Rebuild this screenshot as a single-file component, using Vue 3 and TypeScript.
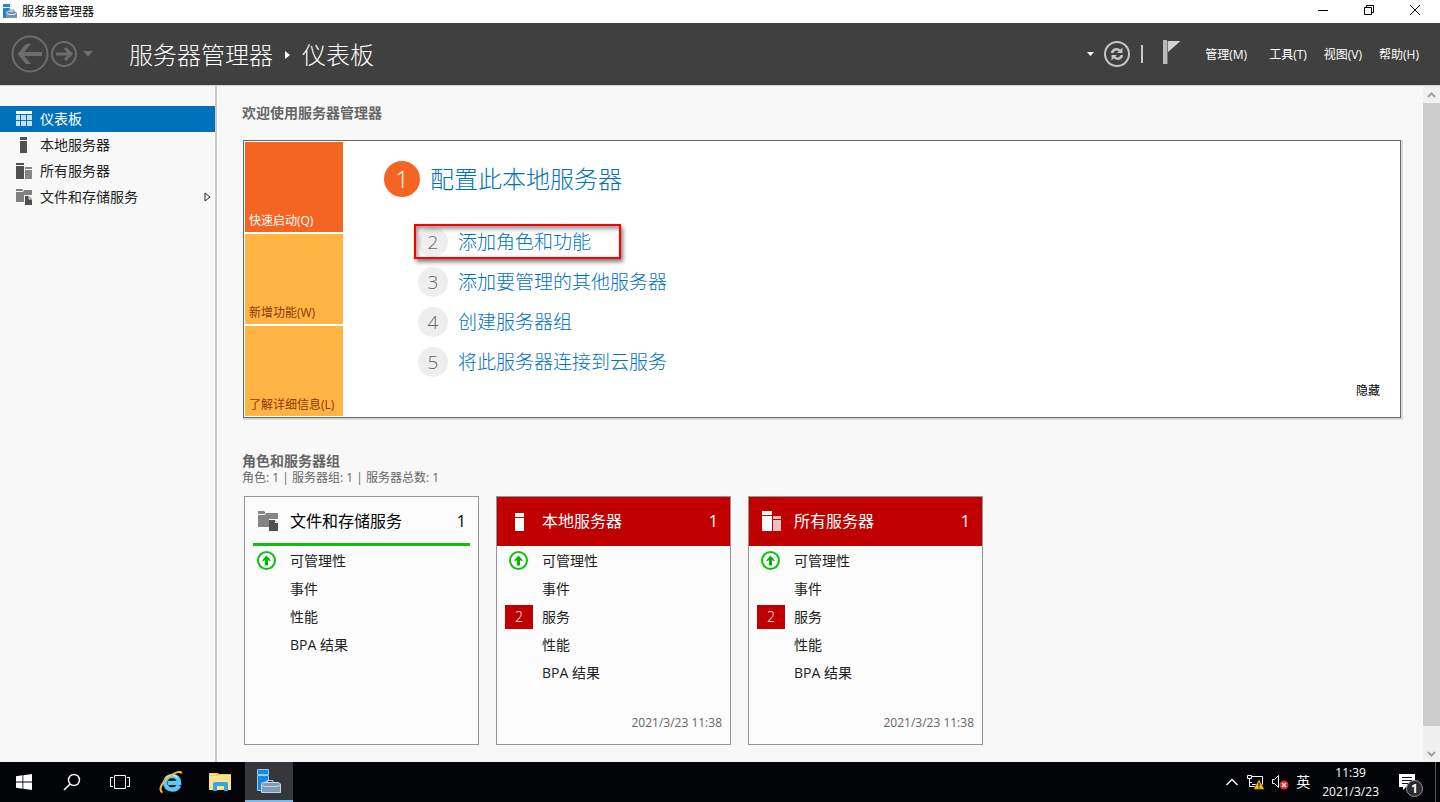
<script setup lang="ts">
import { ref } from 'vue'

type IconKind = 'dash' | 'server' | 'servers' | 'files'

interface NavItem {
  label: string
  icon: IconKind
  expandable?: boolean
}

interface CardRow {
  label: string
  ok?: boolean
  alerts?: number
}

interface Card {
  title: string
  icon: IconKind
  count: number
  alert: boolean
  rows: CardRow[]
  time?: string
}

const active = ref(0)
const showWelcome = ref(true)

const navItems: NavItem[] = [
  { label: '仪表板', icon: 'dash' },
  { label: '本地服务器', icon: 'server' },
  { label: '所有服务器', icon: 'servers' },
  { label: '文件和存储服务', icon: 'files', expandable: true },
]

const menus: string[] = ['管理(M)', '工具(T)', '视图(V)', '帮助(H)']

const steps: string[] = ['添加角色和功能', '添加要管理的其他服务器', '创建服务器组', '将此服务器连接到云服务']

const alertRows: CardRow[] = [
  { label: '可管理性', ok: true },
  { label: '事件' },
  { label: '服务', alerts: 2 },
  { label: '性能' },
  { label: 'BPA 结果' },
]

const cards: Card[] = [
  {
    title: '文件和存储服务',
    icon: 'files',
    count: 1,
    alert: false,
    rows: [{ label: '可管理性', ok: true }, { label: '事件' }, { label: '性能' }, { label: 'BPA 结果' }],
  },
  { title: '本地服务器', icon: 'server', count: 1, alert: true, rows: alertRows, time: '2021/3/23 11:38' },
  { title: '所有服务器', icon: 'servers', count: 1, alert: true, rows: alertRows, time: '2021/3/23 11:38' },
]
</script>

<template>
  <div class="screen">
    <div class="titlebar">
      <svg class="app-icon" viewBox="0 0 16 16" width="16" height="16">
        <path d="M1 0h7v3H1zM1 4h7v2L4 8v6H1z" fill="#1d87d2" />
        <path d="M6 8V6h6v2" fill="none" stroke="#7596b1" />
        <path d="M4 9l2-1.500h7L15 9v5H4z" fill="#7596b1" />
        <path d="M5 9.500l2 1h5l2-1" stroke="#e3edf5" fill="none" />
      </svg>
      <span class="window-name">服务器管理器</span>
      <div class="window-buttons">
        <button type="button" aria-label="最小化">
          <svg width="12" height="12"><path d="M1 6.500h10" stroke="#000" /></svg>
        </button>
        <button type="button" aria-label="还原">
          <svg width="12" height="12" fill="none" stroke="#000">
            <path d="M1.500 3.500h7v7h-7zM3.500 3.500v-2h7v7h-2" />
          </svg>
        </button>
        <button type="button" aria-label="关闭">
          <svg width="12" height="12"><path d="M1 1l10 10M11 1L1 11" stroke="#000" /></svg>
        </button>
      </div>
    </div>

    <header class="header">
      <button type="button" aria-label="后退" class="round-back">
        <svg width="38" height="38" fill="none" stroke="#6d6d6d">
          <circle cx="19" cy="19" r="17.500" stroke-width="2" />
          <path d="M9 19h22" stroke-width="4" />
          <path d="M20 9h-5l-8.500 10L15 29h5l-8.500-10z" fill="#6d6d6d" stroke="none" />
        </svg>
      </button>
      <button type="button" aria-label="前进" class="round-forward">
        <svg width="26" height="26" fill="none" stroke="#6d6d6d">
          <circle cx="13" cy="13" r="12" stroke-width="2" />
          <path d="M5 13h15M14 7l6 6-6 6" stroke-width="3" />
        </svg>
      </button>
      <button type="button" aria-label="历史记录" class="history">
        <svg width="10" height="6"><path d="M0 0h10L5 6z" fill="#6d6d6d" /></svg>
      </button>
      <h1 class="crumbs">
        <span>服务器管理器</span>
        <svg width="5" height="8"><path d="M0 0l5 4-5 4z" fill="#fff" /></svg>
        <span>仪表板</span>
      </h1>
      <div class="header-tools">
        <button type="button" aria-label="刷新选项">
          <svg width="7" height="4"><path d="M0 0h7L3.500 4z" fill="#fff" /></svg>
        </button>
        <button type="button" aria-label="刷新" class="refresh">
          <svg width="26" height="26" fill="none" stroke="#c6c6c6">
            <circle cx="13" cy="13" r="12" stroke-width="2" />
            <path d="M8 12c.500-3.500 5-5 8-2.200M18 14c-.500 3.500-5 5-8 2.200" stroke-width="2.500" />
            <path d="M18.500 6.500v5.500h-5.500zM7.500 19.500V14H13z" fill="#c6c6c6" stroke="none" />
          </svg>
        </button>
        <span class="divider"></span>
        <button type="button" aria-label="通知" class="flag">
          <svg width="18" height="24">
            <path d="M0 0h4v24H0z" fill="#b8b8b8" />
            <path d="M4 1h13.500L4 13z" fill="#d2d2d2" />
            <path d="M4.500 1v23" stroke="#777" />
          </svg>
        </button>
      </div>
      <nav class="menus">
        <button v-for="m in menus" :key="m" type="button">{{ m }}</button>
      </nav>
    </header>

    <div class="body">
      <nav class="sidebar">
        <button
          v-for="(item, i) in navItems"
          :key="item.label"
          type="button"
          class="nav-item"
          :class="{ active: active === i }"
          @click="active = i"
        >
          <svg v-if="item.icon === 'dash'" width="16" height="16" viewBox="0 0 16 16">
            <path d="M0 0h16v3H0z" fill="#fff" />
            <path d="M0 4h4v5H0zM0 10h4v5H0zM5 4h5v5H5zM5 10h5v5H5zM11 4h5v5h-5zM11 10h5v5h-5z" fill="#c6dff1" />
          </svg>
          <svg v-else-if="item.icon === 'server'" width="16" height="16" viewBox="0 0 16 16">
            <path d="M4 0h7v3H4zM4 4h7v12H4z" fill="#505050" />
          </svg>
          <svg v-else-if="item.icon === 'servers'" width="16" height="16" viewBox="0 0 16 16">
            <path d="M0 0h8v2H0zM0 3h8v13H0z" fill="#505050" />
            <path d="M9 4h7v2H9zM9 7h7v9H9z" fill="#858585" />
          </svg>
          <svg v-else width="16" height="16" viewBox="0 0 16 16">
            <path d="M0 0h6l1 1v1H0zM0 3h7l1-2h8v5H8v7H0z" fill="#808080" />
            <path d="M9 7h4l3 3v6H9z" fill="#505050" />
            <path d="M13 6v4h3" fill="none" stroke="#f7f7f7" />
          </svg>
          <span>{{ item.label }}</span>
          <svg v-if="item.expandable" class="expand" width="7" height="10">
            <path d="M1 1l5 4-5 4z" fill="none" stroke="#222" />
          </svg>
        </button>
      </nav>

      <main class="content">
        <h2>欢迎使用服务器管理器</h2>
        <section v-if="showWelcome" class="welcome">
          <div class="tiles">
            <button type="button" class="tile current">快速启动(Q)</button>
            <button type="button" class="tile">新增功能(W)</button>
            <button type="button" class="tile">了解详细信息(L)</button>
          </div>
          <div class="steps">
            <button type="button" class="step first">
              <span class="num">1</span>
              <span>配置此本地服务器</span>
            </button>
            <div class="more">
              <button v-for="(s, i) in steps" :key="s" type="button" class="step" :class="{ marked: i === 0 }">
                <span class="num">{{ i + 2 }}</span>
                <span>{{ s }}</span>
              </button>
            </div>
          </div>
          <button type="button" class="hide" @click="showWelcome = false">隐藏</button>
        </section>

        <h2 class="groups-title">角色和服务器组</h2>
        <p class="summary">角色: 1 | 服务器组: 1 | 服务器总数: 1</p>
        <section class="cards">
          <article v-for="card in cards" :key="card.title" class="card" :class="{ alert: card.alert }">
            <h3>
              <svg v-if="card.icon === 'files'" width="20" height="20" viewBox="0 0 20 20">
                <path d="M0 0h6l1 1v2H0zM0 4h7l1-2h12v6h-9v8H0z" fill="#858585" />
                <path d="M11 9h6l3 3v8h-9z" fill="#505050" />
                <path d="M17 9v3h3z" fill="#eee" />
              </svg>
              <svg v-else-if="card.icon === 'server'" width="20" height="20" viewBox="0 0 20 20">
                <path d="M5 2h9v4H5zM5 7h9v13H5z" fill="#fff" />
              </svg>
              <svg v-else width="20" height="20" viewBox="0 0 20 20">
                <path d="M0 0h10v4H0zM0 5h10v15H0z" fill="#fff" />
                <path d="M11 5h8v3h-8zM11 9h8v11h-8z" fill="#f0c0c0" />
              </svg>
              <a href="#">{{ card.title }}</a>
              <span class="count">{{ card.count }}</span>
            </h3>
            <ul>
              <li v-for="row in card.rows" :key="row.label">
                <span class="state">
                  <svg v-if="row.ok" width="20" height="20" viewBox="0 0 20 20">
                    <circle cx="9.500" cy="9.500" r="8.500" fill="none" stroke="#0dc20d" stroke-width="2" />
                    <path d="M9.500 4.500l4 4.500v1.500l-2.500-1.500v5.500H8V9l-2.500 1.500V9z" fill="#00b400" />
                  </svg>
                  <span v-else-if="row.alerts" class="badge">{{ row.alerts }}</span>
                </span>
                <a href="#">{{ row.label }}</a>
              </li>
            </ul>
            <time v-if="card.time">{{ card.time }}</time>
          </article>
        </section>
      </main>

      <div class="scrollbar">
        <button type="button" aria-label="向上滚动">
          <svg width="9" height="6"><path d="M1 5l3.500-3.500L8 5" fill="none" stroke="#a3a3a3" stroke-width="2" /></svg>
        </button>
        <div class="track"><div class="thumb"></div></div>
        <button type="button" aria-label="向下滚动">
          <svg width="9" height="6"><path d="M1 1l3.500 3.500L8 1" fill="none" stroke="#a3a3a3" stroke-width="2" /></svg>
        </button>
      </div>
    </div>

    <footer class="taskbar">
      <div class="system">
        <button type="button" aria-label="开始">
          <svg width="16" height="16" viewBox="0 0 16 16" fill="#fff">
            <path d="M0 2.300L6.500 1.300v6.200H0zM7.300 1.200L16 0v7.500H7.300zM0 8.400h6.500v6.300L0 13.700zM7.300 8.400H16V16l-8.700-1.200z" />
          </svg>
        </button>
        <button type="button" aria-label="搜索">
          <svg width="18" height="18" fill="none" stroke="#fff">
            <circle cx="11" cy="7" r="5.500" stroke-width="1.400" />
            <path d="M7.200 11L1 17" stroke-width="1.600" />
          </svg>
        </button>
        <button type="button" aria-label="任务视图">
          <svg width="20" height="14" fill="none" stroke="#fff">
            <path d="M4.500.500h11v13h-11zM3 2.500H.500v9H3M17 2.500h2.500v9H17" />
          </svg>
        </button>
      </div>
      <div class="apps">
        <button type="button" aria-label="Internet Explorer">
          <svg width="24" height="24" viewBox="0 0 24 24" fill="none">
            <path d="M20 15.500c-1.200 2.600-3.700 4-6.800 4-4.200 0-7-2.700-7-6.700s3-6.900 7-6.900c4.300 0 6.900 2.800 6.900 7.200H9" stroke="#5cc6f3" stroke-width="4.500" />
            <path d="M6.500 8.500c2.500-3.500 8.500-4.500 12-1" stroke="#b7ecff" stroke-width="1.500" />
            <path d="M3.500 22.500c-5-3 .500-12 8-16.500C16.500 2 22 .500 22.500 3.500" stroke="#f6bd20" stroke-width="2" />
          </svg>
        </button>
        <button type="button" aria-label="文件资源管理器">
          <svg width="22" height="20" viewBox="0 0 22 20">
            <path d="M0 1h9l1 1h12v16H0z" fill="#f3c54b" />
            <path d="M1 2h6v1H1z" fill="#fff0b5" />
            <path d="M0 4h8l2-1h12v15H0z" fill="#fde192" />
            <path d="M4 19v-8l2-1h11l2 1v8h-4v-5H8v5z" fill="#35a7e0" />
          </svg>
        </button>
        <button type="button" aria-label="服务器管理器" class="running">
          <svg width="24" height="24" viewBox="0 0 24 24">
            <path d="M.500.500h11v5H.500zM.500 6.500h11V12L5 14v7.500H.500z" fill="#1689df" stroke="#8ecbf5" />
            <path d="M10 13v-1.500h6V13" fill="none" stroke="#b7cbd9" />
            <path d="M4.500 15l2-1.500h15l2.500 1.500v8.500H4.500z" fill="#7f9db5" />
            <path d="M4.500 15l2-1.500h15l2 1.500v8.500h-19zM5 16.500l3 1h12l3-1" fill="none" stroke="#c6d8e4" />
          </svg>
        </button>
      </div>
      <div class="tray">
        <button type="button" aria-label="显示隐藏的图标" class="tray-up">
          <svg width="12" height="8"><path d="M.500 7L6 1.500 11.500 7" fill="none" stroke="#fff" stroke-width="1.400" /></svg>
        </button>
        <button type="button" aria-label="网络">
          <svg width="18" height="16" viewBox="0 0 18 16">
            <path d="M5 2.500h10.500v8H5M.500 1.500h4v3h-4zM2.500 5v7.500H8M3 8.500h2" fill="none" stroke="#fff" />
            <path d="M12 5l5.500 10.500h-11z" fill="#fdb913" stroke="#000" stroke-width=".500" />
            <path d="M12 8.500v4M12 13.500v1" stroke="#222" stroke-width="1.300" />
          </svg>
        </button>
        <button type="button" aria-label="音量">
          <svg width="17" height="16" viewBox="0 0 17 16">
            <path d="M.500 5.500h2l4-4v12l-4-4h-2z" fill="none" stroke="#fff" />
            <circle cx="12" cy="11" r="4.500" fill="#e0242b" />
            <path d="M10 9l4 4M14 9l-4 4" stroke="#fff" stroke-width="1.400" />
          </svg>
        </button>
        <button type="button" class="ime">英</button>
        <button type="button" class="clock"><span>11:39</span><span>2021/3/23</span></button>
        <button type="button" aria-label="操作中心" class="notices">
          <svg width="16" height="16" viewBox="0 0 16 16">
            <path d="M0 0h16v13H7l-3 3v-3H0z" fill="#fff" />
            <path d="M3 3.500h10M3 6.500h10M3 9.500h6" stroke="#111" />
          </svg>
          <span class="notice-count">1</span>
        </button>
      </div>
    </footer>
  </div>
</template>

<style>
body {
  margin: 0;
}
</style>

<style scoped>
.screen {
  display: flex;
  flex-direction: column;
  min-height: 100vh;
  background: #f8f8f8;
  color: #222;
  font: 14px/20px "Open Sans", "Noto Sans CJK SC", sans-serif;
}

.screen * {
  box-sizing: border-box;
}

button {
  margin: 0;
  padding: 0;
  border: 0;
  background: none;
  color: inherit;
  font: inherit;
  white-space: nowrap;
}

a {
  color: inherit;
  text-decoration: none;
}

svg {
  display: block;
  flex: none;
}

h1,
h2,
h3,
p,
ul {
  margin: 0;
  padding: 0;
  font-weight: 400;
  list-style: none;
}

.titlebar {
  display: flex;
  align-items: center;
  height: 23px;
  padding: 0 2px;
  background: #fff;
  color: #000;
  font-size: 12px;
}

.window-name {
  flex: 1;
  margin-left: 4px;
}

.window-buttons {
  display: flex;
  align-self: stretch;
  padding-bottom: 3px;
}

.window-buttons button {
  display: flex;
  align-items: center;
  justify-content: center;
  width: 46px;
}

.header {
  display: flex;
  align-items: center;
  height: 62px;
  padding: 0 21px 0 11px;
  background: #404040;
  color: #fff;
}

.round-forward {
  margin-left: 2px;
}

.history {
  margin: 0 36px 0 6px;
}

.crumbs {
  display: flex;
  flex: 1;
  align-items: center;
  gap: 12px;
  padding-top: 2px;
  font-size: 24px;
  font-weight: 300;
  line-height: 32px;
  white-space: nowrap;
}

.header-tools {
  display: flex;
  align-items: center;
}

.refresh {
  margin-left: 10px;
}

.divider {
  width: 2px;
  height: 18px;
  margin: 0 20px 0 11px;
  background: #c6c6c6;
}

.flag {
  padding-bottom: 4px;
}

.menus {
  display: flex;
  gap: 17px;
  margin-left: 24px;
  padding-top: 2px;
  font-size: 12px;
}

.menus button:first-child {
  margin-right: 5px;
}

.body {
  display: flex;
  flex: 1;
  border-top: 1px solid #d5d5d5;
}

.sidebar {
  flex: none;
  width: 217px;
  padding-top: 20px;
  border-right: 2px solid #cccccc;
}

.nav-item {
  display: flex;
  align-items: center;
  gap: 8px;
  width: 100%;
  height: 26px;
  padding: 0 4px 0 16px;
}

.nav-item.active {
  background: #0072bc;
  color: #fff;
}

.expand {
  margin-left: auto;
}

.content {
  flex: 1;
  padding: 17px 22px 17px 25px;
}

h2 {
  color: #666;
  font-size: 14px;
  font-weight: 700;
  line-height: 20px;
}

.welcome {
  display: flex;
  margin: 17px 0 0 1px;
  padding: 1px;
  border: 1px solid #696969;
  background: #fff;
  box-shadow: 1px 1px 0 1px #d9d9d9;
}

.tiles {
  display: flex;
  flex-direction: column;
  gap: 2px;
  width: 98px;
}

.tile {
  display: flex;
  align-items: flex-end;
  height: 90px;
  padding: 0 4px 2px;
  background: #ffb444;
  color: #8a3a08;
  font-size: 12px;
  line-height: 18px;
}

.tile.current {
  background: #f46523;
  color: #fff;
}

.steps {
  flex: 1;
  padding: 19px 0 0 41px;
}

.step {
  position: relative;
  display: flex;
  align-items: center;
  gap: 10px;
  color: #0072bc;
  font-size: 19px;
  font-weight: 300;
  line-height: 30px;
}

.num {
  width: 30px;
  height: 30px;
  border-radius: 50%;
  background: #eee;
  color: #666;
  text-align: center;
}

.step.first {
  font-size: 24px;
  line-height: 36px;
}

.first .num {
  width: 36px;
  height: 36px;
  background: #f46523;
  color: #fff;
}

.more {
  display: flex;
  flex-direction: column;
  align-items: flex-start;
  gap: 10px;
  margin: 30px 0 0 34px;
}

.marked::after {
  position: absolute;
  top: -3px;
  right: -30px;
  bottom: -2px;
  left: -4px;
  border: 2px solid #ff0000;
  box-shadow: 2px 3px 4px rgba(0, 0, 0, 0.5), inset 2px 3px 4px rgba(0, 0, 0, 0.4);
  content: "";
}

.hide {
  align-self: flex-end;
  margin: 0 19px 17px;
  color: #000;
  font-size: 12px;
  line-height: 16px;
}

.groups-title {
  margin-top: 34px;
  line-height: 18px;
}

.summary {
  color: #666;
  font-size: 12px;
  line-height: 16px;
}

.cards {
  display: flex;
  flex-wrap: wrap;
  gap: 17px;
  margin: 10px 0 0 2px;
}

.card {
  display: flex;
  flex-direction: column;
  width: 235px;
  min-height: 249px;
  border: 1px solid #969696;
  background: #fcfcfc;
}

h3 {
  display: flex;
  align-items: center;
  gap: 12px;
  height: 49px;
  margin: 0 8px;
  padding: 2px 4px 0 5px;
  border-bottom: 3px solid #0dc20d;
  color: #000;
  font-size: 16px;
}

.count {
  margin-left: auto;
}

.alert h3 {
  margin: 0;
  padding: 0 12px 1px 13px;
  border: 0;
  background: #c00000;
  color: #fff;
}

ul {
  padding: 1px 8px 0;
}

li {
  display: flex;
  align-items: center;
  gap: 9px;
  height: 28px;
}

.state {
  display: flex;
  justify-content: center;
  width: 28px;
}

.badge {
  width: 28px;
  background: #c00000;
  color: #fff;
  font-weight: 300;
  line-height: 24px;
  text-align: center;
}

time {
  margin: auto 8px 11px;
  color: #666;
  font-size: 12px;
  text-align: right;
}

.scrollbar {
  display: flex;
  flex: none;
  flex-direction: column;
  width: 17px;
  background: #f0f0f0;
}

.scrollbar button {
  display: flex;
  align-items: center;
  justify-content: center;
  height: 17px;
}

.track {
  flex: 1;
}

.thumb {
  height: 97%;
  background: #cdcdcd;
}

.taskbar {
  display: flex;
  height: 40px;
  background: #020408;
  color: #fff;
}

.system,
.apps {
  display: flex;
}

.apps {
  gap: 1px;
  margin-left: 3px;
}

.system button,
.apps button {
  display: flex;
  align-items: center;
  justify-content: center;
  width: 48px;
}

.apps .running {
  border-bottom: 2px solid #76b9ed;
  background: #35373b;
}

.tray {
  display: flex;
  align-items: center;
  margin-left: auto;
  padding-right: 4px;
}

.tray button {
  margin-right: 7px;
}

.tray .tray-up {
  margin-right: 9px;
}

.tray .ime {
  margin-right: 12px;
}

.tray .clock {
  display: flex;
  flex-direction: column;
  align-items: center;
  margin-right: 20px;
  font-size: 12px;
  line-height: 19px;
}

.tray .notices {
  position: relative;
  display: flex;
  align-items: center;
  width: 37px;
  height: 40px;
  margin-right: 0;
  border-right: 1px solid #555;
}

.notice-count {
  position: absolute;
  top: 18px;
  left: 7px;
  width: 17px;
  height: 17px;
  border: 1px solid #999;
  border-radius: 50%;
  background: #2b2b2b;
  font-size: 12px;
  font-weight: 700;
  line-height: 15px;
  text-align: center;
}
</style>
